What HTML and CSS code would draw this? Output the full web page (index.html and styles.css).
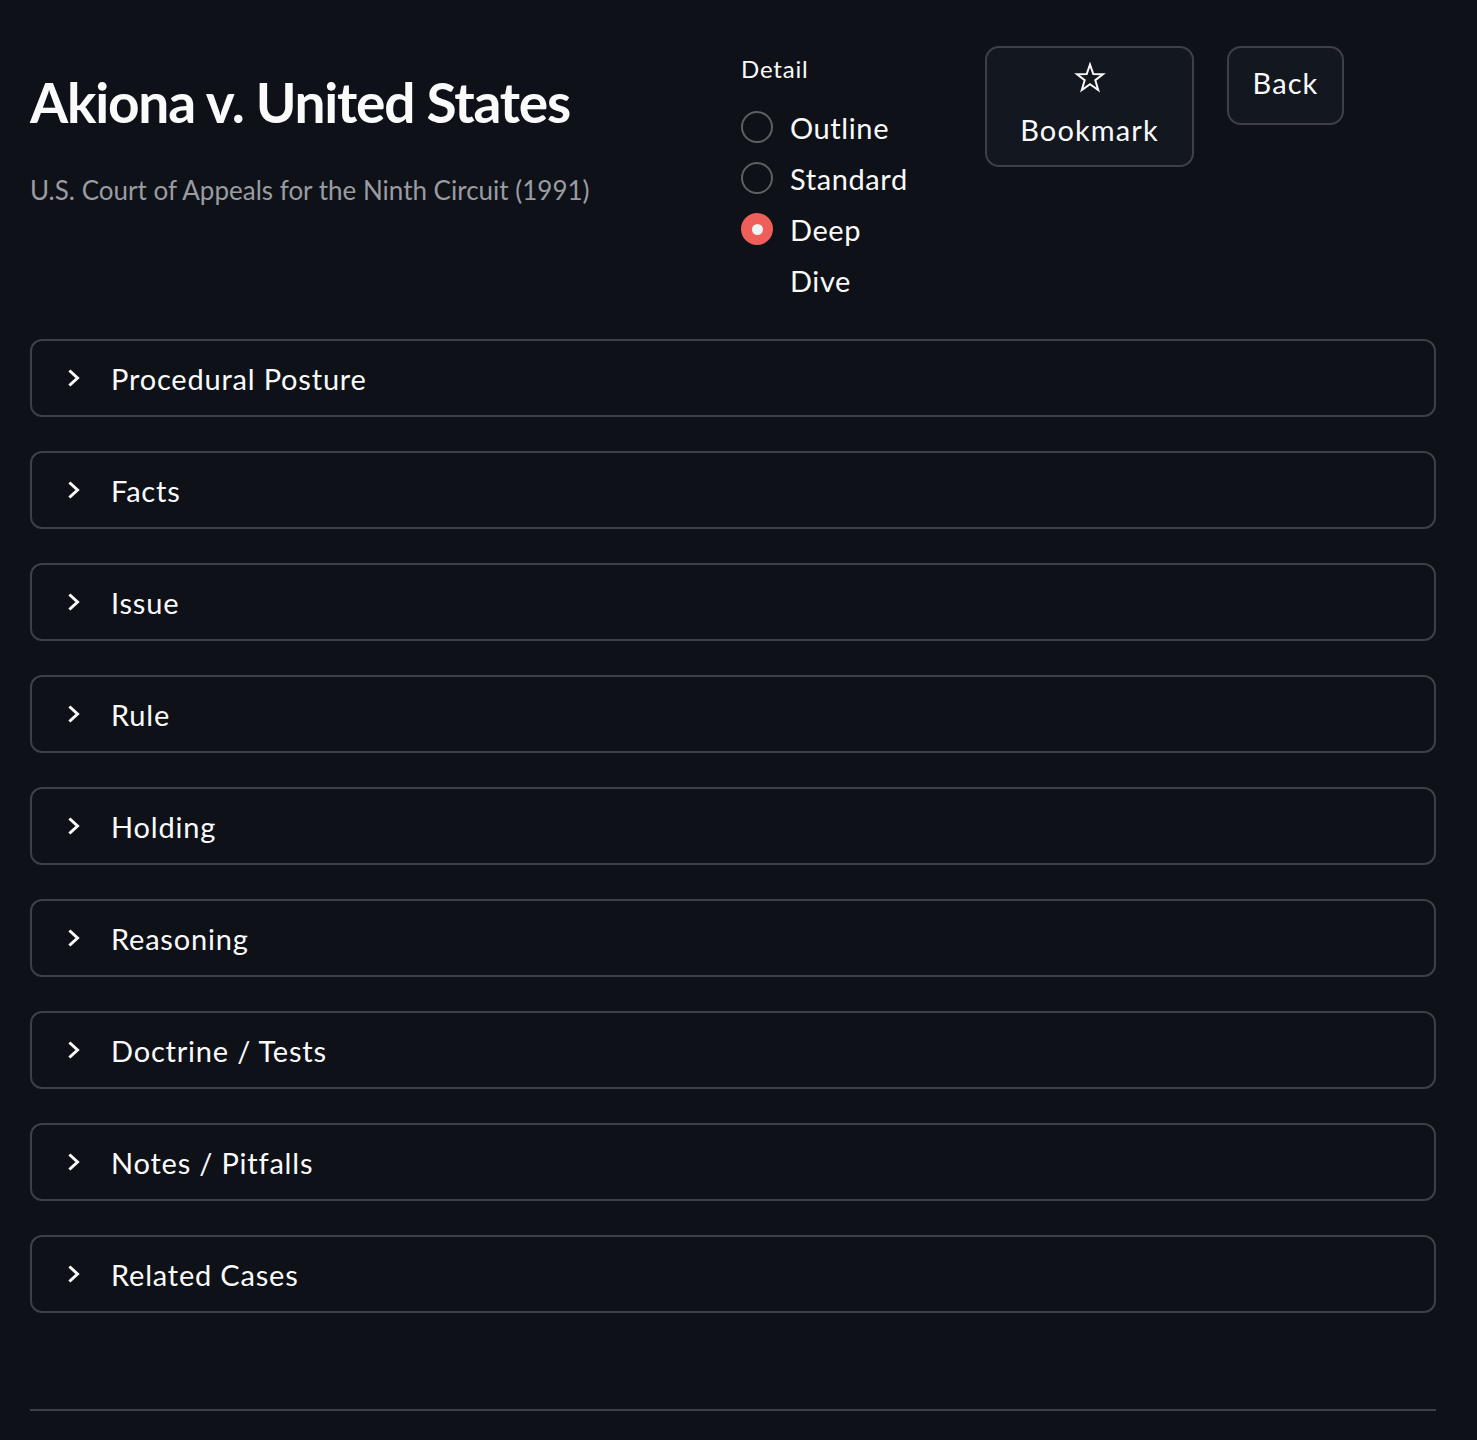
FILE: index.html
```html
<!DOCTYPE html>
<html lang="en">
<head>
<meta charset="utf-8">
<title>Akiona v. United States</title>
<link rel="stylesheet" href="styles.css">
</head>
<body>
<main class="main">
  <header class="header">
    <div class="col-title">
      <h1 class="title">Akiona v. United States</h1>
      <p class="subtitle">U.S. Court of Appeals for the Ninth Circuit (1991)</p>
    </div>
    <div class="col-radio">
      <div class="radio-label">Detail</div>
      <div class="radio-group">
        <label class="radio-opt"><span class="radio-dot"></span><span class="radio-text">Outline</span></label>
        <label class="radio-opt"><span class="radio-dot"></span><span class="radio-text">Standard</span></label>
        <label class="radio-opt checked"><span class="radio-dot"></span><span class="radio-text">Deep<br>Dive</span></label>
      </div>
    </div>
    <div class="col-btn">
      <button class="btn btn-bookmark">
        <svg class="star" width="32" height="32" viewBox="0 0 32 32"><polygon points="16,2.5 19.3,12 29,12.2 21.3,18.2 24.2,28 16,22.2 7.8,28 10.7,18.2 3,12.2 12.7,12" fill="none" stroke="#fafafa" stroke-width="2" stroke-linejoin="miter"/></svg>
        <span>Bookmark</span>
      </button>
    </div>
    <div class="col-btn">
      <button class="btn btn-back">Back</button>
    </div>
  </header>

  <section class="expanders">
    <div class="expander"><svg class="chev" width="16" height="20" viewBox="0 0 16 20"><polyline points="4.5,3.5 11.5,10 4.5,16.5" fill="none" stroke="#fafafa" stroke-width="3" stroke-linecap="square" stroke-linejoin="miter"/></svg><span class="exp-label">Procedural Posture</span></div>
    <div class="expander"><svg class="chev" width="16" height="20" viewBox="0 0 16 20"><polyline points="4.5,3.5 11.5,10 4.5,16.5" fill="none" stroke="#fafafa" stroke-width="3" stroke-linecap="square" stroke-linejoin="miter"/></svg><span class="exp-label">Facts</span></div>
    <div class="expander"><svg class="chev" width="16" height="20" viewBox="0 0 16 20"><polyline points="4.5,3.5 11.5,10 4.5,16.5" fill="none" stroke="#fafafa" stroke-width="3" stroke-linecap="square" stroke-linejoin="miter"/></svg><span class="exp-label">Issue</span></div>
    <div class="expander"><svg class="chev" width="16" height="20" viewBox="0 0 16 20"><polyline points="4.5,3.5 11.5,10 4.5,16.5" fill="none" stroke="#fafafa" stroke-width="3" stroke-linecap="square" stroke-linejoin="miter"/></svg><span class="exp-label">Rule</span></div>
    <div class="expander"><svg class="chev" width="16" height="20" viewBox="0 0 16 20"><polyline points="4.5,3.5 11.5,10 4.5,16.5" fill="none" stroke="#fafafa" stroke-width="3" stroke-linecap="square" stroke-linejoin="miter"/></svg><span class="exp-label">Holding</span></div>
    <div class="expander"><svg class="chev" width="16" height="20" viewBox="0 0 16 20"><polyline points="4.5,3.5 11.5,10 4.5,16.5" fill="none" stroke="#fafafa" stroke-width="3" stroke-linecap="square" stroke-linejoin="miter"/></svg><span class="exp-label">Reasoning</span></div>
    <div class="expander"><svg class="chev" width="16" height="20" viewBox="0 0 16 20"><polyline points="4.5,3.5 11.5,10 4.5,16.5" fill="none" stroke="#fafafa" stroke-width="3" stroke-linecap="square" stroke-linejoin="miter"/></svg><span class="exp-label">Doctrine / Tests</span></div>
    <div class="expander"><svg class="chev" width="16" height="20" viewBox="0 0 16 20"><polyline points="4.5,3.5 11.5,10 4.5,16.5" fill="none" stroke="#fafafa" stroke-width="3" stroke-linecap="square" stroke-linejoin="miter"/></svg><span class="exp-label">Notes / Pitfalls</span></div>
    <div class="expander"><svg class="chev" width="16" height="20" viewBox="0 0 16 20"><polyline points="4.5,3.5 11.5,10 4.5,16.5" fill="none" stroke="#fafafa" stroke-width="3" stroke-linecap="square" stroke-linejoin="miter"/></svg><span class="exp-label">Related Cases</span></div>
  </section>

  <hr class="divider">
</main>
</body>
</html>
```

FILE: styles.css
```css
html, body {
  margin: 0;
  padding: 0;
  background: #0e1117;
  color: #fafafa;
  font-family: Lato, "Noto Sans", sans-serif;
}

.main {
  padding: 46px 41px 0 30px;
}

.header {
  display: grid;
  grid-template-columns: 679px 212px 210px 1fr;
  column-gap: 32px;
  align-items: start;
  height: 293px;
}

.col-title {
  padding-top: 24px;
}

.title {
  margin: 0;
  font-size: 55px;
  font-weight: 700;
  line-height: 64px;
  letter-spacing: -1.2px;
  color: #fafafa;
}

.subtitle {
  margin: 38px 0 0 0;
  font-size: 26px;
  line-height: 36px;
  color: #9a9ca1;
  letter-spacing: 0;
}

.col-radio {
  padding-top: 6px;
}

.radio-label {
  font-size: 24px;
  line-height: 34px;
  margin-bottom: 16px;
  letter-spacing: 0.8px;
}

.radio-group {
  display: flex;
  flex-direction: column;
  gap: 12px;
}

.radio-opt {
  display: flex;
  align-items: flex-start;
  gap: 17px;
  font-size: 29px;
  line-height: 51px;
  margin-top: -12px;
}

.radio-opt:first-child {
  margin-top: 0;
}

.radio-dot {
  flex: none;
  width: 28px;
  height: 28px;
  margin-top: 9px;
  border-radius: 50%;
  border: 2px solid #5e6066;
  background: #0e1117;
  box-sizing: content-box;
  display: flex;
  align-items: center;
  justify-content: center;
}

.radio-opt.checked .radio-dot {
  border-color: #ef5f5a;
  background: #ef5f5a;
}

.radio-opt.checked .radio-dot::after {
  content: "";
  width: 11px;
  height: 11px;
  border-radius: 50%;
  background: #f3f3f3;
}

.radio-text {
  letter-spacing: 0.6px;
}

.btn {
  font-family: inherit;
  color: #fafafa;
  background: #131720;
  border: 2px solid #3d4046;
  border-radius: 14px;
  font-size: 29px;
  cursor: pointer;
  letter-spacing: 1.1px;
}

.btn-bookmark {
  width: 209px;
  height: 121px;
  display: flex;
  flex-direction: column;
  align-items: center;
  justify-content: flex-start;
  padding: 14px 0 0 0;
  gap: 18px;
  line-height: 36px;
}

.star {
  display: block;
}

.btn-back {
  width: 117px;
  height: 79px;
  padding: 0 0 5px 0;
  line-height: 36px;
}

.expanders {
  display: flex;
  flex-direction: column;
  gap: 34px;
}

.expander {
  height: 78px;
  box-sizing: border-box;
  border: 2px solid #3d4046;
  border-radius: 12px;
  display: flex;
  align-items: center;
  padding-left: 34px;
}

.chev {
  flex: none;
  display: block;
}

.exp-label {
  margin-left: 29px;
  font-size: 29px;
  letter-spacing: 0.8px;
}

.divider {
  margin: 96px 0 0 0;
  border: none;
  height: 2px;
  background: #3d4046;
}
```
